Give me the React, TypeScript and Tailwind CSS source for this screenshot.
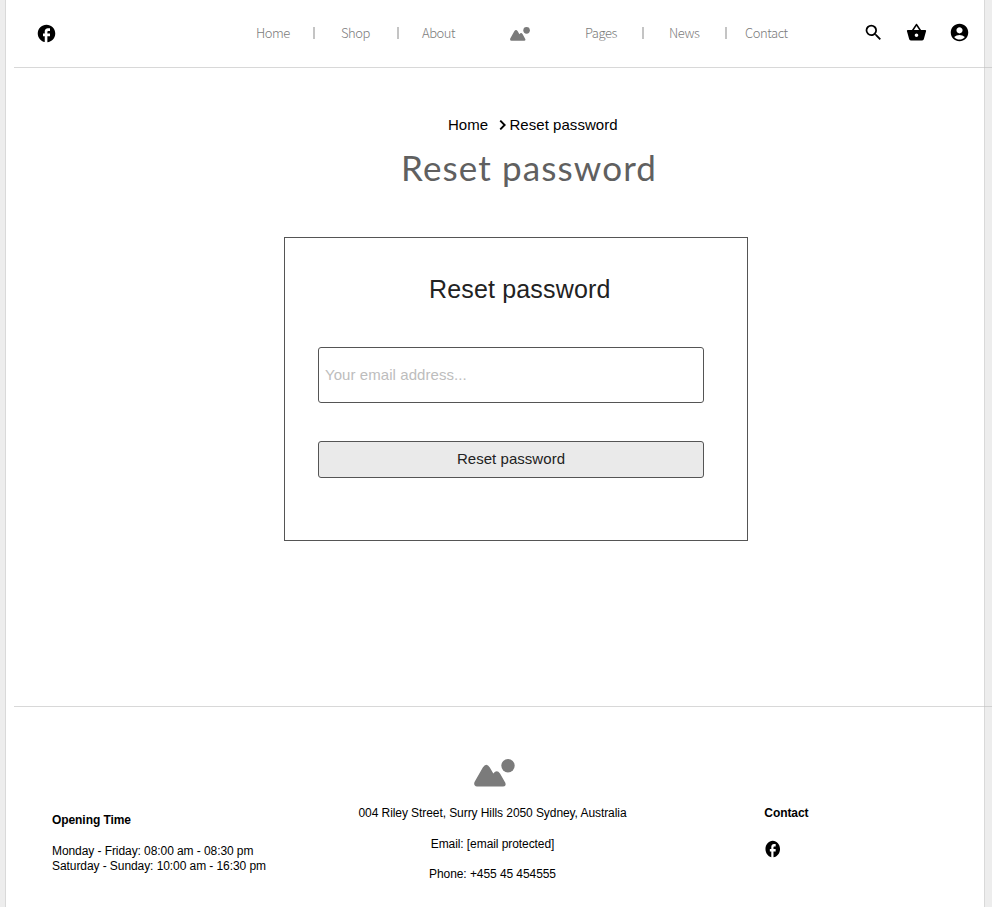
import React from "react";
import { MdSearch, MdShoppingBasket, MdAccountCircle, MdFacebook } from "react-icons/md";

function Mountain({ className }: { className: string }) {
  return (
    <svg className={className} viewBox="0 0 41 28" fill="#7b7b7b" preserveAspectRatio="none">
      <circle cx="34" cy="6.7" r="6.7" />
      <path d="M.5 23 8.8 8.4Q12.3 3.2 15.8 8.4L19.3 14.4Q22.8 10 26 14.4L31.3 23.8Q32.6 27.4 29.2 27.6H3Q-.8 27 .5 23Z" />
    </svg>
  );
}

function NavItem({ label, width }: { label: string; width: string }) {
  return (
    <a className={`${width} shrink-0 whitespace-nowrap`} href="#">
      {label}
    </a>
  );
}

function Divider({ className }: { className: string }) {
  return <span className={`h-3 w-0.5 shrink-0 bg-[#c4c4c4] ${className}`} />;
}

export default function App() {
  return (
    <div className="flex h-[907px] w-[992px] overflow-hidden bg-[#ededed] font-['Liberation_Sans',Arial,sans-serif] text-black">
      <div className="ml-[5px] w-[980px] shrink-0 border-x border-[#d9d9d9] bg-white">
        <header className="flex h-[67px] items-start">
          <MdFacebook className="mt-[23px] ml-[30px] size-[21px] shrink-0" />
          <nav className="mt-[23px] ml-[199px] flex h-5 w-[608px] shrink-0 items-center font-['Noto_Sans_CJK_SC','Open_Sans',sans-serif] text-[13px] leading-5 font-light tracking-[-0.46px] text-[#7b7b7b]">
            <NavItem label="Home" width="w-[57px]" />
            <Divider className="mr-[26px]" />
            <NavItem label="Shop" width="w-[56px]" />
            <Divider className="mr-[23px]" />
            <NavItem label="About" width="w-[87.5px]" />
            <Mountain className="mt-0.5 mr-[55.5px] h-[14px] w-[20px] shrink-0" />
            <NavItem label="Pages" width="w-[57px]" />
            <Divider className="mr-[25px]" />
            <NavItem label="News" width="w-[56px]" />
            <Divider className="mr-[18px]" />
            <NavItem label="Contact" width="w-[60px]" />
          </nav>
          <div className="mt-[21.5px] flex shrink-0 gap-[22px]">
            <MdSearch className="-ml-[1.5px] size-[21px]" />
            <MdShoppingBasket className="size-[21px]" />
            <MdAccountCircle className="size-[21px]" />
          </div>
        </header>
        <hr className="ml-2 w-[978px] border-[#bebebe]/60" />

        <main className="flex h-[638px] flex-col pt-[48px]">
          <div className="ml-[442px] flex h-[18px] items-center text-[15px]">
            <span className="w-[50px]">Home</span>
            <svg className="mr-[3px] h-[10px] w-[8.5px]" viewBox="0 0 8 10" fill="none" stroke="currentColor" strokeWidth="1.9">
              <path d="m2 .6 4.4 4.4L2 9.4" />
            </svg>
            <span className="tracking-[0.04px]">Reset password</span>
          </div>
          <h1 className="mt-[11px] ml-[395px] font-['Lato',sans-serif] text-[35px] leading-[44px] tracking-[1.12px] text-[#606060]">
            Reset password
          </h1>
          <section className="mt-[48px] ml-[278px] h-[304px] w-[464px] border border-[#555] px-[33px] pt-[36px] text-[#222]">
            <h2 className="ml-[111px] text-[25px] leading-[30px] tracking-[0.16px]">Reset password</h2>
            <input
              type="email"
              placeholder="Your email address..."
              className="mt-[43px] block h-[56px] w-[386px] rounded-[3px] border border-[#555] px-[6px] pb-[2px] text-[15px] tracking-[0.07px] placeholder:text-[#bdbdbd]"
            />
            <button className="mt-[38px] block h-[37px] w-[386px] rounded-[3px] border border-[#555] bg-[#eaeaea] text-[15px] tracking-[0.04px]">
              Reset password
            </button>
          </section>
        </main>
        <hr className="ml-2 w-[978px] border-[#bebebe]/60" />

        <footer className="flex text-[12px] leading-[15px] tracking-[-0.075px]">
          <div className="w-[307px] pt-[106px] pl-[46px]">
            <h3 className="font-bold">Opening Time</h3>
            <p className="mt-4">Monday - Friday: 08:00 am - 08:30 pm</p>
            <p>Saturday - Sunday: 10:00 am - 16:30 pm</p>
          </div>
          <div className="flex w-[359px] flex-col items-center pt-[52px]">
            <Mountain className="ml-[3px] h-[28px] w-[41px]" />
            <p className="mt-[19px]">004 Riley Street, Surry Hills 2050 Sydney, Australia</p>
            <p className="mt-4">Email: [email protected]</p>
            <p className="mt-[15px]">Phone: +455 45 454555</p>
          </div>
          <div className="pt-[99px] pl-[92.3px]">
            <h3 className="font-bold">Contact</h3>
            <MdFacebook className="mt-[18px] -ml-[0.3px] h-[20px] w-[17.5px]" preserveAspectRatio="none" />
          </div>
        </footer>
      </div>
    </div>
  );
}
